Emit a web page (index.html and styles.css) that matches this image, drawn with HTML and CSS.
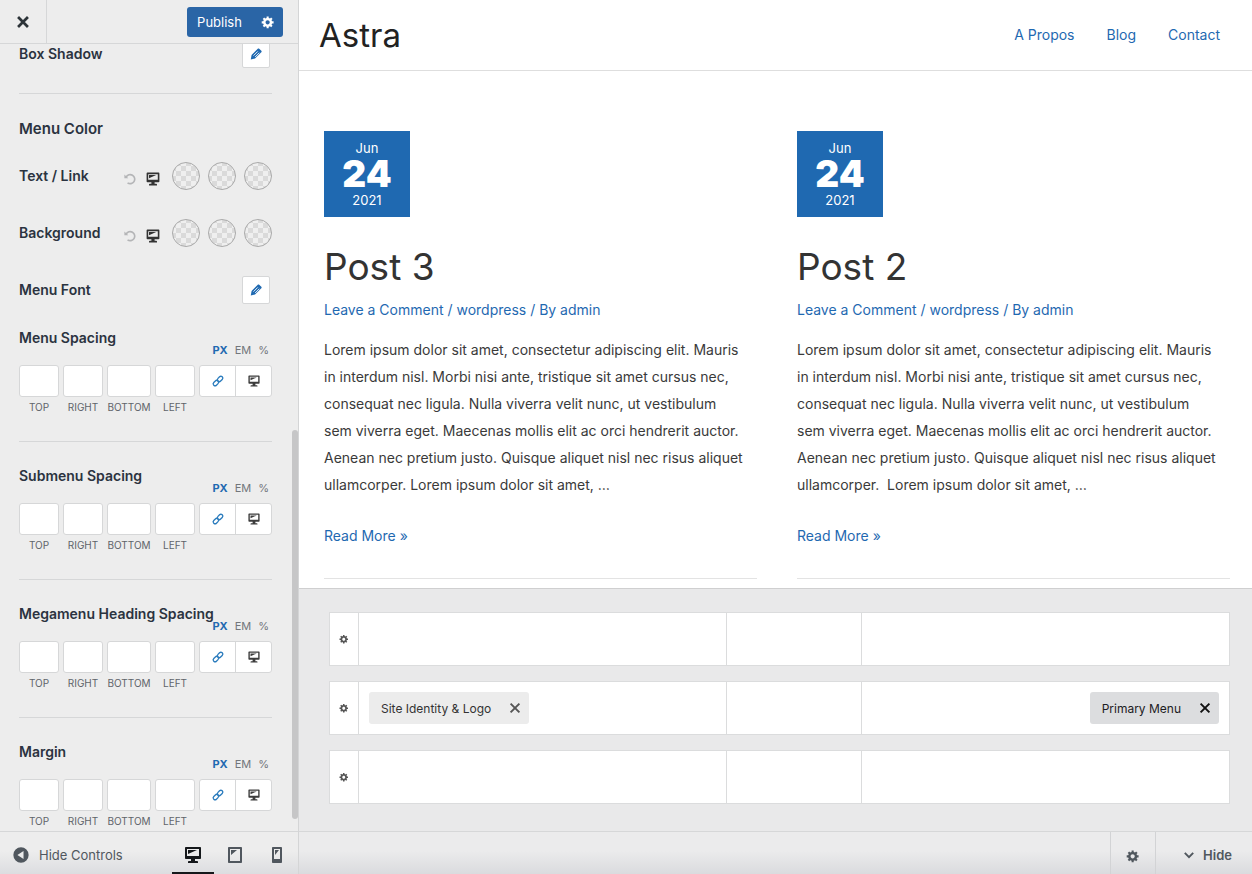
FILE: index.html
```
<!DOCTYPE html>
<html lang="en">
<head>
<meta charset="utf-8">
<title>Astra – Customizer</title>
<link rel="stylesheet" href="styles.css">
</head>
<body>
<svg class="sprite" aria-hidden="true">
  <symbol id="gear" viewBox="0 0 20 20"><path d="M18 12h-2.18c-.17.7-.44 1.35-.81 1.93l1.54 1.54-2.1 2.1-1.54-1.54c-.58.36-1.23.63-1.91.79V19H8v-2.18c-.68-.16-1.33-.43-1.91-.79l-1.54 1.54-2.12-2.12 1.54-1.54c-.36-.58-.63-1.23-.79-1.91H1V9.03h2.17c.16-.7.44-1.35.8-1.94L2.43 5.55l2.1-2.1 1.54 1.54c.58-.37 1.24-.64 1.93-.81V2h3v2.18c.68.16 1.33.43 1.91.79l1.54-1.54 2.12 2.12-1.54 1.54c.36.59.64 1.24.8 1.94H18V12zm-8.5 1.5c1.66 0 3-1.34 3-3s-1.34-3-3-3-3 1.34-3 3 1.34 3 3 3z"/></symbol>
  <symbol id="desktop" viewBox="0 0 20 20"><path d="M3 2h14c.55 0 1 .45 1 1v10c0 .55-.45 1-1 1h-5v2h2c.55 0 1 .45 1 1v1H5v-1c0-.55.45-1 1-1h2v-2H3c-.55 0-1-.45-1-1V3c0-.55.45-1 1-1zm13 9V4H4v7h12zM5 5h9L5 9V5z"/></symbol>
  <symbol id="tablet" viewBox="0 0 20 20"><path d="M4 2h12c.55 0 1 .45 1 1v14c0 .55-.45 1-1 1H4c-.55 0-1-.45-1-1V3c0-.55.45-1 1-1zm11 14V4H5v12h10zM6 5h6l-6 5V5z"/></symbol>
  <symbol id="phone" viewBox="0 0 20 20"><path d="M6 2h8c.55 0 1 .45 1 1v14c0 .55-.45 1-1 1H6c-.55 0-1-.45-1-1V3c0-.55.45-1 1-1zm7 12V4H7v10h6zM8 5h4l-4 5V5z"/></symbol>
  <symbol id="pencil" viewBox="0 0 20 20"><path d="M12.500 2.500c.6-.6 1.500-.6 2.100 0l3 3c.6.6.6 1.500 0 2.100l-9 9L2.500 18l1.200-6.500z"/><path d="M6.500 12.300l6-6M8.800 14.200l6-6" fill="none" stroke="#fff" stroke-width="1.300"/></symbol>
  <symbol id="cross" viewBox="0 0 20 20"><path d="M4.500 4.500l11 11M15.500 4.500l-11 11" fill="none" stroke="currentColor" stroke-width="3"/></symbol>
  <symbol id="cross-thin" viewBox="0 0 20 20"><path d="M4.500 4.500l11 11M15.500 4.500l-11 11" fill="none" stroke="currentColor" stroke-width="2.400"/></symbol>
  <symbol id="reset" viewBox="0 0 20 20"><path d="M4.500 7.200A6.500 6.500 0 1 1 6.500 15.500" fill="none" stroke="currentColor" stroke-width="2.400"/><path d="M2 3.500v5.500h5.500z"/></symbol>
  <symbol id="link" viewBox="0 0 20 20"><g fill="none" stroke="currentColor" stroke-width="1.900"><rect x="-4.300" y="-2.700" width="8.600" height="5.400" rx="2.700" transform="translate(13 7) rotate(-45)"/><rect x="-4.300" y="-2.700" width="8.600" height="5.400" rx="2.700" transform="translate(7 13) rotate(-45)"/></g></symbol>
  <symbol id="collapse" viewBox="0 0 20 20"><path fill-rule="evenodd" d="M10 1.500a8.500 8.500 0 1 0 0 17 8.500 8.500 0 0 0 0-17zM12.800 5.500v9L6 10z"/></symbol>
  <symbol id="chevron" viewBox="0 0 20 20"><path d="M4 7l6 6 6-6" fill="none" stroke="currentColor" stroke-width="2.800"/></symbol>
</svg>

<div class="customizer">
  <aside class="sidebar">
    <header class="sidebar-header">
      <button class="close" aria-label="Close"><svg class="icon icon-18"><use href="#cross"/></svg></button>
      <div class="publish">
        <button class="publish-main">Publish</button>
        <button class="publish-gear" aria-label="Publish settings"><svg class="icon icon-14"><use href="#gear"/></svg></button>
      </div>
    </header>

    <div class="panel">
      <div class="control-row divided">
        <span class="control-title">Box Shadow</span>
        <button class="edit" aria-label="Edit box shadow"><svg class="icon icon-14"><use href="#pencil"/></svg></button>
      </div>
      <h2 class="section-title">Menu Color</h2>
      <div class="control-row">
        <span class="control-title">Text / Link</span>
        <div class="color-tools">
          <button class="reset" aria-label="Reset"><svg class="icon icon-14"><use href="#reset"/></svg></button>
          <button class="device" aria-label="Desktop"><svg class="icon icon-16"><use href="#desktop"/></svg></button>
        </div>
        <div class="swatches"><button class="swatch" aria-label="Normal"></button><button class="swatch" aria-label="Hover"></button><button class="swatch" aria-label="Active"></button></div>
      </div>
      <div class="control-row">
        <span class="control-title">Background</span>
        <div class="color-tools">
          <button class="reset" aria-label="Reset"><svg class="icon icon-14"><use href="#reset"/></svg></button>
          <button class="device" aria-label="Desktop"><svg class="icon icon-16"><use href="#desktop"/></svg></button>
        </div>
        <div class="swatches"><button class="swatch" aria-label="Normal"></button><button class="swatch" aria-label="Hover"></button><button class="swatch" aria-label="Active"></button></div>
      </div>
      <div class="control-row">
        <span class="control-title">Menu Font</span>
        <button class="edit" aria-label="Edit menu font"><svg class="icon icon-14"><use href="#pencil"/></svg></button>
      </div>

      <section class="spacing">
        <div class="spacing-head"><h3 class="control-title">Menu Spacing</h3><div class="units"><button class="unit active">PX</button><button class="unit">EM</button><button class="unit">%</button></div></div>
        <div class="fields">
          <div class="field"><input id="menu-top"><label for="menu-top">TOP</label></div>
          <div class="field"><input id="menu-right"><label for="menu-right">RIGHT</label></div>
          <div class="field"><input id="menu-bottom"><label for="menu-bottom">BOTTOM</label></div>
          <div class="field"><input id="menu-left"><label for="menu-left">LEFT</label></div>
          <div class="toggles"><button class="toggle linked" aria-label="Link values"><svg class="icon icon-14"><use href="#link"/></svg></button><button class="toggle" aria-label="Desktop"><svg class="icon icon-14"><use href="#desktop"/></svg></button></div>
        </div>
      </section>
      <section class="spacing">
        <div class="spacing-head"><h3 class="control-title">Submenu Spacing</h3><div class="units"><button class="unit active">PX</button><button class="unit">EM</button><button class="unit">%</button></div></div>
        <div class="fields">
          <div class="field"><input id="sub-top"><label for="sub-top">TOP</label></div>
          <div class="field"><input id="sub-right"><label for="sub-right">RIGHT</label></div>
          <div class="field"><input id="sub-bottom"><label for="sub-bottom">BOTTOM</label></div>
          <div class="field"><input id="sub-left"><label for="sub-left">LEFT</label></div>
          <div class="toggles"><button class="toggle linked" aria-label="Link values"><svg class="icon icon-14"><use href="#link"/></svg></button><button class="toggle" aria-label="Desktop"><svg class="icon icon-14"><use href="#desktop"/></svg></button></div>
        </div>
      </section>
      <section class="spacing">
        <div class="spacing-head"><h3 class="control-title">Megamenu Heading Spacing</h3><div class="units"><button class="unit active">PX</button><button class="unit">EM</button><button class="unit">%</button></div></div>
        <div class="fields">
          <div class="field"><input id="mega-top"><label for="mega-top">TOP</label></div>
          <div class="field"><input id="mega-right"><label for="mega-right">RIGHT</label></div>
          <div class="field"><input id="mega-bottom"><label for="mega-bottom">BOTTOM</label></div>
          <div class="field"><input id="mega-left"><label for="mega-left">LEFT</label></div>
          <div class="toggles"><button class="toggle linked" aria-label="Link values"><svg class="icon icon-14"><use href="#link"/></svg></button><button class="toggle" aria-label="Desktop"><svg class="icon icon-14"><use href="#desktop"/></svg></button></div>
        </div>
      </section>
      <section class="spacing">
        <div class="spacing-head"><h3 class="control-title">Margin</h3><div class="units"><button class="unit active">PX</button><button class="unit">EM</button><button class="unit">%</button></div></div>
        <div class="fields">
          <div class="field"><input id="margin-top"><label for="margin-top">TOP</label></div>
          <div class="field"><input id="margin-right"><label for="margin-right">RIGHT</label></div>
          <div class="field"><input id="margin-bottom"><label for="margin-bottom">BOTTOM</label></div>
          <div class="field"><input id="margin-left"><label for="margin-left">LEFT</label></div>
          <div class="toggles"><button class="toggle linked" aria-label="Link values"><svg class="icon icon-14"><use href="#link"/></svg></button><button class="toggle" aria-label="Desktop"><svg class="icon icon-14"><use href="#desktop"/></svg></button></div>
        </div>
      </section>
      <div class="scroll-thumb"></div>
    </div>

    <footer class="sidebar-footer">
      <button class="hide-controls"><svg class="icon icon-18"><use href="#collapse"/></svg>Hide Controls</button>
      <div class="devices">
        <button class="device-tab current" aria-label="Desktop preview"><svg class="icon icon-20"><use href="#desktop"/></svg></button>
        <button class="device-tab" aria-label="Tablet preview"><svg class="icon icon-20"><use href="#tablet"/></svg></button>
        <button class="device-tab" aria-label="Mobile preview"><svg class="icon icon-20"><use href="#phone"/></svg></button>
      </div>
    </footer>
  </aside>

  <div class="main">
    <div class="preview">
      <header class="site-header">
        <a class="site-title" href="#">Astra</a>
        <nav class="site-nav"><a href="#">A Propos</a><a href="#">Blog</a><a href="#">Contact</a></nav>
      </header>
      <main class="posts">
        <article class="post">
          <time class="date" datetime="2021-06-24"><span>Jun</span><strong>24</strong><span>2021</span></time>
          <h2 class="post-title">Post 3</h2>
          <p class="meta"><a href="#">Leave a Comment</a> / <a href="#">wordpress</a> / By <a href="#">admin</a></p>
          <p class="excerpt">Lorem ipsum dolor sit amet, consectetur adipiscing elit. Mauris<br>in interdum nisl. Morbi nisi ante, tristique sit amet cursus nec,<br>consequat nec ligula. Nulla viverra velit nunc, ut vestibulum<br>sem viverra eget. Maecenas mollis elit ac orci hendrerit auctor.<br>Aenean nec pretium justo. Quisque aliquet nisl nec risus aliquet<br>ullamcorper. Lorem ipsum dolor sit amet, …</p>
          <a class="read-more" href="#">Read More »</a>
        </article>
        <article class="post">
          <time class="date" datetime="2021-06-24"><span>Jun</span><strong>24</strong><span>2021</span></time>
          <h2 class="post-title">Post 2</h2>
          <p class="meta"><a href="#">Leave a Comment</a> / <a href="#">wordpress</a> / By <a href="#">admin</a></p>
          <p class="excerpt">Lorem ipsum dolor sit amet, consectetur adipiscing elit. Mauris<br>in interdum nisl. Morbi nisi ante, tristique sit amet cursus nec,<br>consequat nec ligula. Nulla viverra velit nunc, ut vestibulum<br>sem viverra eget. Maecenas mollis elit ac orci hendrerit auctor.<br>Aenean nec pretium justo. Quisque aliquet nisl nec risus aliquet<br>ullamcorper.&nbsp; Lorem ipsum dolor sit amet, …</p>
          <a class="read-more" href="#">Read More »</a>
        </article>
      </main>
    </div>

    <div class="builder">
      <div class="builder-row">
        <button class="row-gear" aria-label="Above header settings"><svg class="icon icon-10"><use href="#gear"/></svg></button>
        <div class="zone"></div><div class="zone"></div><div class="zone"></div>
      </div>
      <div class="builder-row">
        <button class="row-gear" aria-label="Primary header settings"><svg class="icon icon-10"><use href="#gear"/></svg></button>
        <div class="zone"><div class="chip">Site Identity &amp; Logo<button class="remove" aria-label="Remove"><svg class="icon icon-16"><use href="#cross-thin"/></svg></button></div></div>
        <div class="zone"></div>
        <div class="zone end"><div class="chip selected">Primary Menu<button class="remove" aria-label="Remove"><svg class="icon icon-16"><use href="#cross-thin"/></svg></button></div></div>
      </div>
      <div class="builder-row">
        <button class="row-gear" aria-label="Below header settings"><svg class="icon icon-10"><use href="#gear"/></svg></button>
        <div class="zone"></div><div class="zone"></div><div class="zone"></div>
      </div>
    </div>

    <footer class="builder-footer">
      <button class="footer-gear" aria-label="Builder settings"><svg class="icon icon-14"><use href="#gear"/></svg></button>
      <button class="hide"><svg class="icon icon-14"><use href="#chevron"/></svg>Hide</button>
    </footer>
  </div>
</div>
</body>
</html>
```
FILE: styles.css
```
* { box-sizing: border-box; }
body { margin: 0; font-family: Inter, "Liberation Sans", sans-serif; color: #2c3338; background: #fff; }
h2, h3, p { margin: 0; }
button { border: 0; padding: 0; background: none; font: inherit; color: inherit; display: flex; align-items: center; justify-content: center; }
a { color: #1f69b1; text-decoration: none; }
.sprite { display: none; }
.icon { display: block; flex: none; fill: currentColor; }
.icon-10 { width: 10px; height: 10px; }
.icon-14 { width: 14px; height: 14px; }
.icon-16 { width: 16px; height: 16px; }
.icon-18 { width: 18px; height: 18px; }
.icon-20 { width: 20px; height: 20px; }

.customizer { display: grid; grid-template-columns: 299px 1fr; height: 100vh; overflow: hidden; }

/* Sidebar */
.sidebar { display: flex; flex-direction: column; min-height: 0; background: #ededed; border-right: 1px solid #d4d5d6; }
.sidebar-header { display: flex; justify-content: space-between; align-items: center; height: 44px; flex: none; padding-right: 15px; border-bottom: 1px solid #d6d7d8; }
.close { width: 47px; align-self: stretch; border-right: 1px solid #d6d7d8; }
.publish { display: flex; height: 30px; border-radius: 3px; background: #2a65a6; color: #fff; font-size: 13px; }
.publish-main { width: 65px; }
.publish-gear { width: 31px; }

.panel { position: relative; flex: 1; min-height: 0; overflow: hidden; display: flex; flex-direction: column; justify-content: flex-end; padding: 0 26px 3px 19px; }
.panel > * { flex: none; }
.control-row { display: flex; align-items: center; height: 28px; margin-bottom: 29px; }
.control-row:has(+ .spacing) { margin-bottom: 24px; }
.control-row.divided { height: 54px; padding-bottom: 25px; margin-bottom: 25px; border-bottom: 1px solid #d6d7d8; }
.control-title { flex: 1; min-width: 0; font-size: 14px; line-height: 20px; font-weight: 600; white-space: nowrap; color: #2b3340; }
.section-title { margin-bottom: 23px; font-size: 15px; line-height: 20px; font-weight: 600; color: #2b3340; }
.edit { width: 28px; height: 28px; margin-right: 2px; background: #fff; border: 1px solid #d6d7d8; border-radius: 2px; color: #1f69b1; }
.color-tools { display: flex; align-items: center; gap: 8px; margin-right: 11px; padding-top: 5px; }
.reset { color: #b4b5b7; }
.device { color: #333; }
.swatches { display: flex; gap: 8px; }
.swatch { width: 28px; height: 28px; border-radius: 50%; border: 1px solid #aaa; background: repeating-conic-gradient(#dadada 0 25%, #efefef 0 50%) 50% / 10px 10px; }

.spacing { padding-bottom: 27px; margin-bottom: 24px; border-bottom: 1px solid #d6d7d8; }
.spacing:nth-last-child(2) { padding-bottom: 0; margin-bottom: 0; border-bottom: 0; }
.spacing-head { display: flex; justify-content: space-between; height: 32px; margin-bottom: 5px; }
.units { display: flex; align-items: flex-end; gap: 7px; padding-right: 3px; }
.unit { height: 20px; font-size: 11px; color: #72767b; }
.unit.active { color: #1f69b1; font-weight: 700; }
.fields { display: grid; grid-template-columns: 40fr 40fr 44fr 40fr 73fr; gap: 4px; }
.field { display: flex; flex-direction: column; align-items: center; gap: 3px; min-width: 0; }
.field input { width: 100%; height: 32px; padding: 0 4px; border: 1px solid #d6d7d8; border-radius: 3px; background: #fff; font: inherit; }
.field label { font-size: 10px; line-height: 14px; color: #5f646a; }
.toggles { display: flex; height: 32px; border: 1px solid #d6d7d8; border-radius: 3px; background: #fff; }
.toggle { flex: 1; color: #3c3c3c; }
.toggle.linked { color: #2b7cbd; border-right: 1px solid #d6d7d8; }
.scroll-thumb { position: absolute; right: 0; top: 49%; bottom: 12px; width: 6px; border-radius: 3px; background: #c6c6c7; }

.sidebar-footer { display: flex; justify-content: space-between; height: 43px; flex: none; padding-left: 12px; border-top: 1px solid #d6d7d8; background: linear-gradient(#ededed 45%, #dcdde0); }
.hide-controls { gap: 9px; padding-top: 4px; font-size: 13px; color: #50575e; }
.devices { display: flex; }
.device-tab { width: 42px; padding-top: 6px; border-bottom: 2px solid transparent; color: #50575e; }
.device-tab.current { color: #15181b; border-bottom-color: #15181b; }

/* Preview */
.main { display: flex; flex-direction: column; min-width: 0; min-height: 0; }
.preview { flex: 1; min-height: 0; overflow: hidden; background: #fff; }
.site-header { display: flex; align-items: center; justify-content: space-between; height: 71px; padding: 0 32px 0 20px; border-bottom: 1px solid #dedede; }
.site-title { font-size: 33px; line-height: 44px; color: #222; }
.site-nav { display: flex; gap: 32px; font-size: 14px; line-height: 20px; }
.posts { display: grid; grid-template-columns: 1fr 1fr; gap: 40px; padding: 60px 22px 0 25px; }
.post { min-width: 0; padding-bottom: 29px; border-bottom: 1px solid #e3e3e3; }
.date { display: flex; flex-direction: column; align-items: center; justify-content: center; width: 86px; height: 86px; background: #1f69b1; color: #fff; font-size: 13px; line-height: 16px; }
.date strong { font-size: 37px; line-height: 36px; font-weight: 900; }
.post-title { margin-top: 25px; font-size: 37px; line-height: 50px; font-weight: 400; color: #333; }
.meta { margin-top: 6px; font-size: 14px; line-height: 24px; color: #1f69b1; }
.excerpt { margin-top: 14px; font-size: 14px; line-height: 27px; color: #3a3a3a; }
.read-more { display: block; margin-top: 24px; font-size: 14px; line-height: 27px; }

/* Header builder */
.builder { display: flex; flex-direction: column; gap: 15px; flex: none; padding: 23px 22px 27px 30px; border-top: 1px solid #cfcfd0; background: #e9e9ea; }
.builder-row { display: grid; grid-template-columns: 29px 1fr 135px 1fr; height: 54px; border: 1px solid #dbdcdd; background: #fff; }
.row-gear { border-right: 1px solid #dbdcdd; color: #555; }
.zone { display: flex; align-items: center; padding: 0 10px; border-right: 1px solid #dbdcdd; }
.zone:last-child { border-right: 0; }
.zone.end { justify-content: flex-end; }
.chip { display: flex; align-items: center; gap: 16px; height: 32px; padding: 0 6px 0 12px; border-radius: 3px; background: #ececec; font-size: 12px; color: #333; }
.chip.selected { background: #dcdddf; color: #1d2023; }
.remove { color: #555; }
.selected .remove { color: #111; }
.builder-footer { display: flex; justify-content: flex-end; height: 43px; flex: none; border-top: 1px solid #d6d7d8; background: linear-gradient(#ebebec 45%, #dadbde); }
.footer-gear { width: 46px; padding-top: 6px; border-left: 1px solid #d2d3d5; border-right: 1px solid #d2d3d5; color: #50575e; }
.hide { gap: 7px; width: 96px; padding: 3px 20px 0 26px; font-size: 13px; font-weight: 600; color: #50575e; }
```
